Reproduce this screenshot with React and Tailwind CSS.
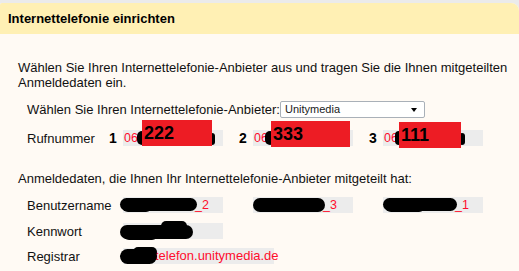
import React from "react";

// redacted screenshot of a router setup page: Internettelefonie

function Field({ width = "w-[100px]", children }) {
  return (
    <div className={`relative ${width} h-[16px] bg-[#ececec] text-[12.5px] leading-[16px] text-[#ff0d2d]`}>
      {children}
    </div>
  );
}

function RedBox({ className, text }) {
  return (
    <div className={`absolute h-[26px] bg-[#ed1c24] pl-[2px] text-[18px] leading-[26px] font-bold text-black ${className}`}>
      {text}
    </div>
  );
}

function Num({ children }) {
  return <div className="w-[15px] pl-[1px] text-[14px] font-bold leading-[16px] text-black">{children}</div>;
}

export default function App() {
  return (
    <div className="w-[519px] h-[271px] overflow-hidden bg-[#ebebeb] pt-[3px] font-['Liberation_Sans',Arial,sans-serif] text-[13px] text-[#111]">
      <div className="h-full bg-[#fffaf4] rounded-tr-[8px] rounded-tl-[2px] overflow-hidden">
        {/* --- HEADER --- */}
        <div className="h-[31px] bg-[#fff0b4] flex items-center px-[8px] pt-[1px]">
          <h1 className="text-[13px] font-bold text-black">Internettelefonie einrichten</h1>
        </div>

        <div className="pl-[18px] pt-[26px]">
          <p className="leading-[15px] w-[495px]">
            Wählen Sie Ihren Internettelefonie-Anbieter aus und tragen Sie die Ihnen mitgeteilten Anmeldedaten ein.
          </p>

          {/* --- PROVIDER SELECT --- */}
          <div className="mt-[11px] pl-[9px] flex items-center h-[17px]">
            <div className="w-[253px] leading-[15px]">Wählen Sie Ihren Internettelefonie-Anbieter:</div>
            <div className="w-[145px] h-[17px] border border-[#a9b0b8] rounded-[2px] bg-white flex items-center justify-between pl-[4px] pr-[7px]">
              <span className="text-[11px] leading-[15px] text-[#1a1a1a]">Unitymedia</span>
              <span className="w-0 h-0 border-l-[3.5px] border-r-[3.5px] border-t-[4px] border-l-transparent border-r-transparent border-t-black" />
            </div>
          </div>

          {/* --- RUFNUMMERN --- */}
          <div className="mt-[12px] pl-[9px] flex items-center h-[16px]">
            <div className="w-[81px] leading-[15px]">Rufnummer</div>
            <Num>1</Num>
            <Field>
              <span className="pl-[1px]">06</span>
              <div className="absolute left-[14px] top-[1px] w-[10px] h-[14px] rounded-full bg-black" />
              <div className="absolute left-[86px] top-[3px] w-[6px] h-[12px] rounded-full bg-black" />
              <RedBox className="left-[19px] top-[-10px] w-[70px]" text="222" />
            </Field>
            <div className="w-[15px]" />
            <Num>2</Num>
            <Field>
              <span className="pl-[1px]">06</span>
              <div className="absolute left-[12px] top-[1px] w-[10px] h-[14px] rounded-full bg-black" />
              <RedBox className="left-[18px] top-[-9px] w-[79px]" text="333" />
            </Field>
            <div className="w-[15px]" />
            <Num>3</Num>
            <Field>
              <span className="pl-[1px]">06</span>
              <div className="absolute left-[12px] top-[1px] w-[8px] h-[14px] rounded-full bg-black" />
              <div className="absolute left-[76px] top-[3px] w-[6px] h-[12px] rounded-full bg-black" />
              <RedBox className="left-[16px] top-[-8px] w-[62px]" text="111" />
            </Field>
          </div>

          <p className="mt-[25px] leading-[15px]">Anmeldedaten, die Ihnen Ihr Internettelefonie-Anbieter mitgeteilt hat:</p>

          {/* --- ZUGANGSDATEN --- */}
          <div className="mt-[11px] pl-[9px] flex items-center h-[16px]">
            <div className="w-[96px] leading-[15px]">Benutzername</div>
            <Field>
              <div className="absolute left-[-3px] top-[1px] w-[77px] h-[13px] rounded-full bg-black" />
              <div className="absolute left-[-1px] top-[3px] w-[30px] h-[12px] rounded-full bg-black" />
              <span className="pl-[72px]">_2</span>
            </Field>
            <div className="w-[30px]" />
            <Field>
              <div className="absolute left-[0px] top-[1px] w-[72px] h-[14px] rounded-full bg-black" />
              <span className="pl-[70px]">_3</span>
            </Field>
            <div className="w-[30px]" />
            <Field>
              <div className="absolute left-[0px] top-[1px] w-[74px] h-[13px] rounded-full bg-black" />
              <div className="absolute left-[2px] top-[3px] w-[40px] h-[12px] rounded-full bg-black" />
              <span className="pl-[72px]">_1</span>
            </Field>
          </div>

          <div className="mt-[10px] pl-[9px] flex items-center h-[16px]">
            <div className="w-[96px] leading-[15px]">Kennwort</div>
            <Field>
              <div className="absolute left-[-3px] top-[2px] w-[73px] h-[14px] rounded-full bg-black" />
              <div className="absolute left-[38px] top-[-2px] w-[26px] h-[10px] rounded-full bg-black" />
              <div className="absolute left-[0px] top-[5px] w-[35px] h-[12px] rounded-full bg-black" />
            </Field>
          </div>

          <div className="mt-[9px] pl-[9px] flex items-center h-[16px]">
            <div className="w-[96px] leading-[15px]">Registrar</div>
            <Field width="w-[151px]">
              <div className="absolute left-[-3px] top-[1px] w-[37px] h-[15px] rounded-full bg-black" />
              <div className="absolute left-[10px] top-[-1px] w-[24px] h-[10px] rounded-full bg-black" />
              <span className="pl-[32px] text-[13px]">telefon.unitymedia.de</span>
            </Field>
          </div>
        </div>
      </div>
    </div>
  );
}
